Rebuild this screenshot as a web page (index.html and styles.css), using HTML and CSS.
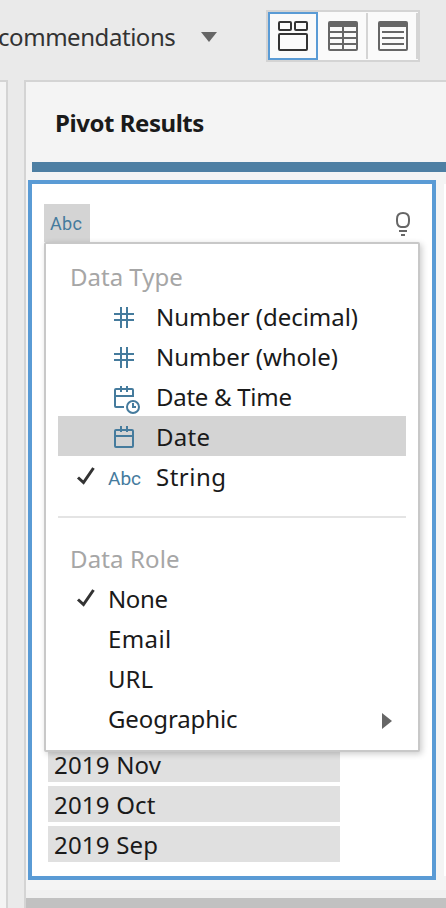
FILE: index.html
```html
<!DOCTYPE html>
<html lang="en">
<head>
<meta charset="utf-8">
<title>Pivot Results</title>
<link rel="stylesheet" href="styles.css">
</head>
<body>
<header class="toolbar">
  <div class="dropdown"><span class="dropdown-label">commendations</span>
    <svg class="caret" width="16" height="10" viewBox="0 0 16 10"><path d="M0 0H16L8 10Z" fill="#666"/></svg>
  </div>
  <div class="views">
    <button class="view selected" aria-label="Profile view"><svg width="30" height="30" viewBox="0 0 30 30" fill="none" stroke="#333" stroke-width="2"><rect x="1" y="1" width="12" height="8" rx="1"/><rect x="17" y="1" width="12" height="8" rx="1"/><rect x="1" y="13" width="28" height="16" rx="1"/></svg></button>
    <button class="view" aria-label="Grid view"><svg width="30" height="30" viewBox="0 0 30 30" fill="none" stroke="#666" stroke-width="2"><rect x="1" y="1" width="28" height="28" rx="1"/><path d="M1 3H29M1 5H29M1 11H29M1 17H29M1 23H29M15 5V29"/></svg></button>
    <button class="view divided" aria-label="List view"><svg width="30" height="30" viewBox="0 0 30 30" fill="none" stroke="#666" stroke-width="2"><rect x="1" y="1" width="28" height="28" rx="1"/><path d="M1 3H29M1 5H29M4 11H26M4 17H26M4 23H26"/></svg></button>
  </div>
</header>
<main class="workspace">
  <aside class="side"></aside>
  <section class="panel">
    <h1 class="title"><span>Pivot Results</span></h1>
    <div class="accent"></div>
    <div class="cards">
      <article class="card">
        <div class="card-head">
          <div class="type">Abc</div>
          <svg class="bulb" width="16" height="26" viewBox="0 0 16 26" fill="none" stroke="#666" stroke-width="2"><path d="M8 2C4 2 2 4.500 2 8V10C2 13 3.500 15.500 6 16H10C12.500 15.500 14 13 14 10V8C14 4.500 12 2 8 2Z"/><path d="M4 20H12M6 24H10"/></svg>
        </div>
        <ul class="values">
          <li><span class="nov">2019 Nov</span></li>
          <li><span class="oct">2019 Oct</span></li>
          <li><span class="sep">2019 Sep</span></li>
        </ul>
        <nav class="menu">
          <h2 class="heading"><span class="t-type">Data Type</span></h2>
          <div class="item"><span class="check"></span><span class="icon"><svg width="32" height="28" viewBox="0 0 32 28" fill="none" stroke="#457b9d" stroke-width="2"><path d="M6 12H26M6 18H26M13 5V26M19 5V26"/></svg></span><span class="t-dec">Number (decimal)</span></div>
          <div class="item"><span class="check"></span><span class="icon"><svg width="32" height="28" viewBox="0 0 32 28" fill="none" stroke="#457b9d" stroke-width="2"><path d="M6 12H26M6 18H26M13 5V26M19 5V26"/></svg></span><span class="t-whole">Number (whole)</span></div>
          <div class="item"><span class="check"></span><span class="icon"><svg width="32" height="28" viewBox="0 0 32 28" fill="none" stroke="#457b9d" stroke-width="2"><path d="M16 25H8Q7 25 7 24V8Q7 7 8 7H24Q25 7 25 8V15M7 14H25M13 4V10M19 4V10"/><circle cx="25" cy="25" r="6"/><path d="M25 21V25H28"/></svg></span><span class="t-time">Date &amp; Time</span></div>
          <div class="item active"><span class="check"></span><span class="icon"><svg width="32" height="28" viewBox="0 0 32 28" fill="none" stroke="#457b9d" stroke-width="2"><rect x="7" y="8" width="18" height="17" rx="1"/><path d="M7 14H25M13 4V10M19 4V10"/></svg></span><span class="t-date">Date</span></div>
          <div class="item"><span class="check"><svg width="18" height="18" viewBox="0 0 18 18" fill="none" stroke="#333" stroke-width="3"><path d="M1 10.500L6.500 15.500L16.500 1"/></svg></span><span class="icon abc">Abc</span><span class="t-string">String</span></div>
          <hr>
          <h2 class="heading"><span class="t-role">Data Role</span></h2>
          <div class="item"><span class="check"><svg width="18" height="18" viewBox="0 0 18 18" fill="none" stroke="#333" stroke-width="3"><path d="M1 10.500L6.500 15.500L16.500 1"/></svg></span><span class="t-none">None</span></div>
          <div class="item"><span class="check"></span><span class="t-email">Email</span></div>
          <div class="item"><span class="check"></span><span class="t-url">URL</span></div>
          <div class="item"><span class="check"></span><span class="t-geo">Geographic</span><svg class="arrow" width="10" height="16" viewBox="0 0 10 16"><path d="M0 0L10 8L0 16Z" fill="#666"/></svg></div>
        </nav>
      </article>
      <article class="card-next"></article>
    </div>
    <div class="scroll"></div>
  </section>
</main>
</body>
</html>
```
FILE: styles.css
```css
* { box-sizing: border-box; }
body { margin: 0; width: 446px; height: 908px; overflow: hidden; background: #eaeaea; color: #1a1a1a; font: 24px/40px "Noto Sans", sans-serif; }
svg { display: block; flex: none; overflow: visible; }
h1, h2, ul { margin: 0; padding: 0; list-style: none; }
.toolbar { height: 80px; display: flex; }
.dropdown { display: flex; width: 266px; padding-top: 17px; color: #333; }
.dropdown-label { width: 201px; margin-left: -2px; letter-spacing: -.45px; }
.caret { margin: 15px 0 0 2px; }
.views { display: flex; width: 154px; height: 52px; margin-top: 10px; border: 2px solid #d4d4d4; background: #fafafa; }
.view { width: 50px; height: 48px; padding: 0; border: 0; background: none; display: flex; align-items: center; justify-content: center; }
.selected { border: 2px solid #5a9bd5; }
.divided { background: linear-gradient(#d4d4d4, #d4d4d4) 0 1px / 2px 46px no-repeat, linear-gradient(#d4d4d4, #d4d4d4) 100% 1px / 2px 46px no-repeat; width: 52px; margin-left: -2px; padding-left: 2px; }
.workspace { display: flex; height: 828px; }
.side { width: 8px; margin-right: 16px; border: solid #d4d4d4; border-width: 2px 2px 0 0; background: #f4f4f4; }
.panel { width: 422px; border: solid #d4d4d4; border-width: 2px 0 0 2px; background: #f4f4f4; }
.title { height: 80px; padding: 21px 0 0 29px; font: bold 24px/40px "Noto Sans", sans-serif; letter-spacing: -.45px; }
.accent { height: 10px; margin-left: 6px; background: #4e7fa3; }
.cards { display: flex; height: 718px; padding: 8px 0 10px 2px; gap: 8px; }
.card { position: relative; width: 408px; flex: none; border: 4px solid #5a9bd5; background: #fff; padding: 20px 12px 0; }
.card-next { flex: 1; margin: 4px 0; background: #fff; }
.card-head { height: 38px; display: flex; justify-content: space-between; }
.type { width: 46px; height: 38px; padding-left: 6px; background: #d4d4d4; color: #457b9d; font: 18px/40px Roboto, sans-serif; letter-spacing: .3px; }
.bulb { margin: 7px 9px 0 0; }
.values { margin: 504px 0 0 4px; width: 292px; display: grid; gap: 4px; }
.values li { height: 36px; background: #e0e0e0; padding-left: 6px; line-height: 38px; letter-spacing: .2px; }
.menu { position: absolute; left: 12px; top: 58px; width: 376px; height: 510px; padding: 12px; border: 2px solid #c8c8c8; border-radius: 2px; background: #fff; box-shadow: 2px 2px 6px rgba(0,0,0,.2); }
.heading { height: 40px; padding-left: 12px; font: 24px/41px "Noto Sans", sans-serif; color: #a6a6a6; }
.item { height: 40px; display: flex; line-height: 41px; }
.active { background: #d4d4d4; }
.check { width: 50px; flex: none; padding: 11px 0 0 19px; }
.icon { width: 48px; flex: none; padding-top: 6px; }
.abc { padding: 0; font: 19px/45px Roboto, sans-serif; color: #457b9d; }
.t-dec, .t-whole { letter-spacing: -.03px; }
.t-time { letter-spacing: -.28px; }
.t-date { letter-spacing: .25px; }
.t-string { letter-spacing: .5px; }
.t-role { letter-spacing: .12px; }
.t-none { letter-spacing: -.4px; }
.t-email { letter-spacing: .4px; }
.t-geo { letter-spacing: -.1px; }
.arrow { margin: 15px 14px 0 auto; }
hr { height: 2px; margin: 20px 0; border: 0; background: #e4e4e4; }
.scroll { height: 18px; border-top: 8px solid #f0f0f0; background: #c1c1c1; }
```
